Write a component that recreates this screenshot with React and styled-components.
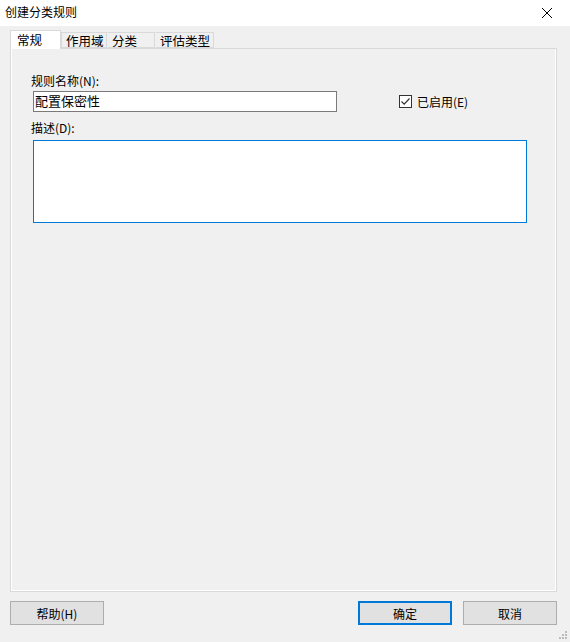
import styled, { createGlobalStyle } from 'styled-components'

const GlobalStyle = createGlobalStyle`
  html, body { margin: 0; padding: 0; background: #f0f0f0; }
  body {
    font-family: "Noto Sans CJK SC", "Liberation Sans", sans-serif;
    font-size: 12px;
    color: #000;
  }
`

const Window = styled.div`
  width: 570px;
  height: 642px;
  background: #f0f0f0;
  display: flex;
  flex-direction: column;
  position: relative;
  overflow: hidden;
`

const TitleBar = styled.div`
  height: 26px;
  background: #fff;
  display: flex;
  align-items: center;
  justify-content: space-between;
  padding: 0 17px 0 5px;
  box-sizing: border-box;
`

const Title = styled.span`
  font-size: 12px;
  line-height: 16px;
  margin-top: -2px;
`

const Body = styled.div`
  padding: 4px 13px 0 10px;
  display: flex;
  flex-direction: column;
`

const TabRow = styled.div`
  display: flex;
  align-items: flex-end;
  height: 18px;
  position: relative;
  z-index: 1;
`

const Tab = styled.div`
  width: ${p => p.$w}px;
  height: ${p => (p.$active ? 19 : 16)}px;
  box-sizing: border-box;
  border: 1px solid #d9d9d9;
  border-bottom: ${p => (p.$active ? 'none' : '1px solid #d9d9d9')};
  border-left-color: ${p => (p.$active ? '#d9d9d9' : 'transparent')};
  background: ${p => (p.$active ? '#fff' : '#f0f0f0')};
  padding-left: ${p => (p.$active ? 6 : 4)}px;
  font-size: 12.5px;
  line-height: ${p => (p.$active ? 17 : 15)}px;
  margin-bottom: ${p => (p.$active ? -1 : 0)}px;
  &:nth-child(2) { border-left-color: #d9d9d9; }
`

const Panel = styled.div`
  height: 544px;
  box-sizing: border-box;
  border: 1px solid #d9d9d9;
  background: #fff;
  display: flex;
`

const PanelInner = styled.div`
  flex: 1;
  margin: 0 1px 1px 1px;
  background: #f0f0f0;
  padding: 24px 0 0 19px;
  display: flex;
  flex-direction: column;
`

const Label = styled.div`
  font-size: 12px;
  line-height: 16px;
  height: 16px;
`

const NameRow = styled.div`
  display: flex;
  align-items: center;
  margin-top: 2px;
`

const TextInput = styled.div`
  width: 304px;
  height: 21px;
  box-sizing: border-box;
  margin-left: 2px;
  border: 1px solid #7a7a7a;
  background: #fff;
  padding-left: 1px;
  font-size: 13px;
  line-height: 18px;
`

const Check = styled.label`
  display: flex;
  align-items: center;
  gap: 5px;
  margin-left: 62px;
  font-size: 12px;
`

const Box = styled.span`
  width: 13px;
  height: 13px;
  box-sizing: border-box;
  border: 1px solid #333;
  background: #fff;
  display: flex;
  align-items: center;
  justify-content: center;
`

const DescLabel = styled(Label)`
  margin-top: 8px;
`

const TextArea = styled.div`
  width: 494px;
  height: 83px;
  box-sizing: border-box;
  margin: 4px 0 0 2px;
  border: 1px solid #0078d7;
  background: #fff;
`

const Footer = styled.div`
  display: flex;
  margin-top: 9px;
  padding: 0 13px 0 10px;
`

const Button = styled.div`
  width: 94px;
  height: 24px;
  box-sizing: border-box;
  background: #e1e1e1;
  border: ${p => (p.$primary ? '2px solid #0078d7' : '1px solid #adadad')};
  display: flex;
  align-items: center;
  justify-content: center;
  font-size: 12px;
  margin-left: ${p => p.$ml || 0}px;
`

const Grip = styled.svg`
  position: absolute;
  right: 2px;
  bottom: 2px;
`

export default function App() {
  return (
    <>
      <GlobalStyle />
      <Window>
        <TitleBar>
          <Title>创建分类规则</Title>
          <svg width="12" height="12" viewBox="0 0 12 12">
            <path d="M1 1 L11 11 M11 1 L1 11" stroke="#000" strokeWidth="1" fill="none" />
          </svg>
        </TitleBar>
        <Body>
          <TabRow>
            <Tab $active $w={51}>常规</Tab>
            <Tab $w={46}>作用域</Tab>
            <Tab $w={48}>分类</Tab>
            <Tab $w={59}>评估类型</Tab>
          </TabRow>
          <Panel>
            <PanelInner>
              <Label>规则名称(N):</Label>
              <NameRow>
                <TextInput>配置保密性</TextInput>
                <Check>
                  <Box>
                    <svg width="11" height="11" viewBox="0 0 11 11">
                      <path d="M1.5 5.5 L4.2 8.2 L9.5 2.5" stroke="#333" strokeWidth="1.2" fill="none" />
                    </svg>
                  </Box>
                  已启用(E)
                </Check>
              </NameRow>
              <DescLabel>描述(D):</DescLabel>
              <TextArea />
            </PanelInner>
          </Panel>
        </Body>
        <Footer>
          <Button>帮助(H)</Button>
          <Button $primary $ml={254}>确定</Button>
          <Button $ml={11}>取消</Button>
        </Footer>
        <Grip width="10" height="10" viewBox="0 0 10 10">
          <g fill="#bcbcbc">
            <rect x="7" y="1" width="2" height="2" />
            <rect x="4" y="4" width="2" height="2" />
            <rect x="7" y="4" width="2" height="2" />
            <rect x="1" y="7" width="2" height="2" />
            <rect x="4" y="7" width="2" height="2" />
            <rect x="7" y="7" width="2" height="2" />
          </g>
        </Grip>
      </Window>
    </>
  )
}
